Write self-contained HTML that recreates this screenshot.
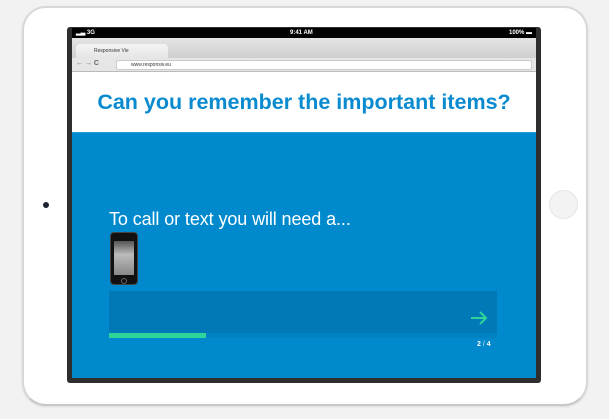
<!DOCTYPE html>
<html><head><style>
*{margin:0;padding:0;box-sizing:border-box}
body{width:609px;height:419px;background:#f2f2f2;position:relative;overflow:hidden;font-family:"Liberation Sans",Arial,sans-serif}
.ipad{position:absolute;left:22px;top:6px;width:566px;height:400px;background:#fff;border-radius:24px;border:2px solid #d8d8d8;border-bottom-color:#c8c8c8;box-shadow:0 1px 2px rgba(0,0,0,.1)}
.bezel{position:absolute;left:67px;top:27px;width:474px;height:356px;background:#2e2e2e;border-radius:3px}
.screen{position:absolute;left:72px;top:28px;width:464px;height:350px;background:#fff;overflow:hidden}
.status{height:10px;background:#000;color:#fff;font-size:6px;font-weight:bold;position:relative;line-height:10px}
.tabs{height:20px;background:linear-gradient(#e4e4e4,#cfcfcf);position:relative}
.tab{position:absolute;left:4px;top:6px;width:92px;height:14px;background:linear-gradient(#f4f4f4,#e6e6e6);border-radius:4px 4px 0 0;font-size:5px;line-height:14px;padding-left:18px;color:#333}
.addr{height:14px;background:#e6e6e6;border-bottom:1px solid #bbb;position:relative;font-size:7px;color:#666}
.url{position:absolute;left:44px;top:2px;right:4px;height:10px;background:#fff;border:1px solid #ccc;border-radius:2px;font-size:5px;line-height:8px;padding-left:14px;color:#333}
.title{height:60px;text-align:center;color:#0a8bd0;font-weight:bold;font-size:21.5px;line-height:60px}
.blue{height:246px;background:#008acd;position:relative;border-top:1px solid #2a9ad6}
</style></head><body>
<div class="ipad"></div>
<div style="position:absolute;left:43px;top:202px;width:6px;height:6px;border-radius:50%;background:#1c2430"></div>
<div style="position:absolute;left:549px;top:190px;width:29px;height:29px;border-radius:50%;background:#f3f3f3;border:1px solid #e6e6e6"></div>
<div class="bezel"></div>
<div class="screen">
 <div class="status"><span style="position:absolute;left:4px">▂▃ 3G</span><span style="position:absolute;left:218px">9:41 AM</span><span style="position:absolute;right:4px">100% ▬</span></div>
 <div class="tabs"><div class="tab">Responsive Vie</div></div>
 <div class="addr"><span style="position:absolute;left:4px;top:2px;font-weight:bold">←  →  C</span><div class="url">www.responsiv.eu</div></div>
 <div class="title">Can you remember the important items?</div>
 <div class="blue">
  <div style="position:absolute;left:37px;top:76px;color:#fff;font-size:18px;letter-spacing:-0.1px">To call or text you will need a...</div>
  <div style="position:absolute;left:38px;top:99px;width:28px;height:53px;background:#111;border-radius:4px;border:1px solid #444">
   <div style="position:absolute;left:3px;top:8px;width:20px;height:34px;background:linear-gradient(#555,#bbb 40%,#888)"></div>
   <div style="position:absolute;left:10px;top:45px;width:6px;height:6px;border-radius:50%;border:1px solid #666"></div>
  </div>
  <div style="position:absolute;left:37px;top:158px;width:388px;height:42px;background:#0079b6"></div>
  <div style="position:absolute;left:37px;top:200px;width:388px;height:5px;background:#0081c2"></div>
  <div style="position:absolute;left:37px;top:200px;width:97px;height:5px;background:#2ed59b"></div>
  <svg style="position:absolute;left:398px;top:177px" width="18" height="16" viewBox="0 0 18 16"><path d="M1 8H16M10 2L16 8L10 14" stroke="#2ed59b" stroke-width="2" fill="none"/></svg>
  <div style="position:absolute;left:405px;top:208px;color:#fff;font-size:7px;font-weight:bold">2 <span style="color:#9cc9e6">/</span> 4</div>
 </div>
</div>
</body></html>
